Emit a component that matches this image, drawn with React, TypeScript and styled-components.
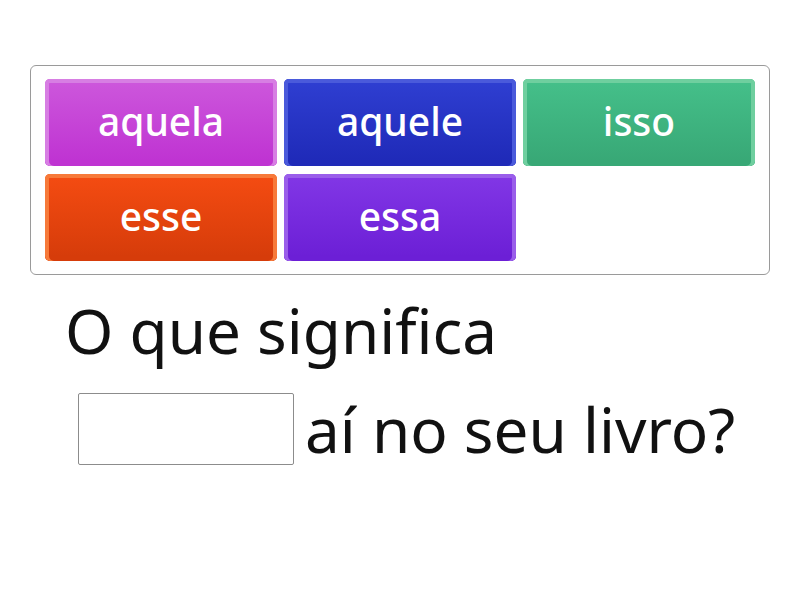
import React from 'react'
import styled, { createGlobalStyle } from 'styled-components'

const GlobalStyle = createGlobalStyle`
  body {
    margin: 0;
    background: #ffffff;
    font-family: 'Noto Sans', 'Lato', sans-serif;
    font-variant-ligatures: none;
  }
`

interface TileProps {
  base: string
  light: string
  dark: string
}

const Page = styled.div`
  width: 800px;
  height: 600px;
  padding: 65px 30px 0 30px;
  box-sizing: border-box;
`

const Bank = styled.div`
  box-sizing: border-box;
  width: 740px;
  height: 210px;
  border: 1px solid #9a9a9a;
  border-radius: 6px;
  padding: 13px 14px;
  display: grid;
  grid-template-columns: repeat(3, 232px);
  grid-auto-rows: 87px;
  gap: 8px 7px;
`

const Tile = styled.div<TileProps>`
  border-radius: 5px;
  background: linear-gradient(to bottom, ${(p) => p.base}, ${(p) => p.dark} 95%);
  box-shadow: inset 0 4px 0 ${(p) => p.light}, inset 4px 0 0 ${(p) => p.light},
    inset -4px 0 0 ${(p) => p.light}, inset 0 -6px 0 ${(p) => p.dark};
  color: #ffffff;
  font-size: 39px;
  font-weight: 500;
  display: flex;
  align-items: center;
  justify-content: center;
  padding-bottom: 5px;
  box-sizing: border-box;
`

const Sentence = styled.div`
  padding: 19px 0 0 35px;
  font-size: 62px;
  color: #111111;
  line-height: 1;
`

const Line = styled.div`
  display: flex;
  align-items: center;
  height: 72px;
`

const Second = styled(Line)`
  margin-top: 27px;
  padding-left: 13px;
  gap: 11px;
`

const Blank = styled.div`
  width: 214px;
  height: 70px;
  border: 1px solid #8c8c8c;
  border-radius: 2px;
  background: #ffffff;
`

const tiles: { word: string; base: string; light: string; dark: string }[] = [
  { word: 'aquela', base: '#cd58dc', light: '#d77ee3', dark: '#bf33d2' },
  { word: 'aquele', base: '#2f3fd2', light: '#4a5adb', dark: '#1f2ab8' },
  { word: 'isso', base: '#45c08a', light: '#6fcf9f', dark: '#38a876' },
  { word: 'esse', base: '#f54c12', light: '#f77a3a', dark: '#d63c0a' },
  { word: 'essa', base: '#8237e6', light: '#9a5eea', dark: '#6c1fd6' },
]

const App: React.FC = () => {
  return (
    <Page>
      <GlobalStyle />
      <Bank>
        {tiles.map((t) => (
          <Tile key={t.word} base={t.base} light={t.light} dark={t.dark}>
            {t.word}
          </Tile>
        ))}
      </Bank>
      <Sentence>
        <Line>O que significa</Line>
        <Second>
          <Blank />
          <span>aí no seu livro?</span>
        </Second>
      </Sentence>
    </Page>
  )
}

export default App
